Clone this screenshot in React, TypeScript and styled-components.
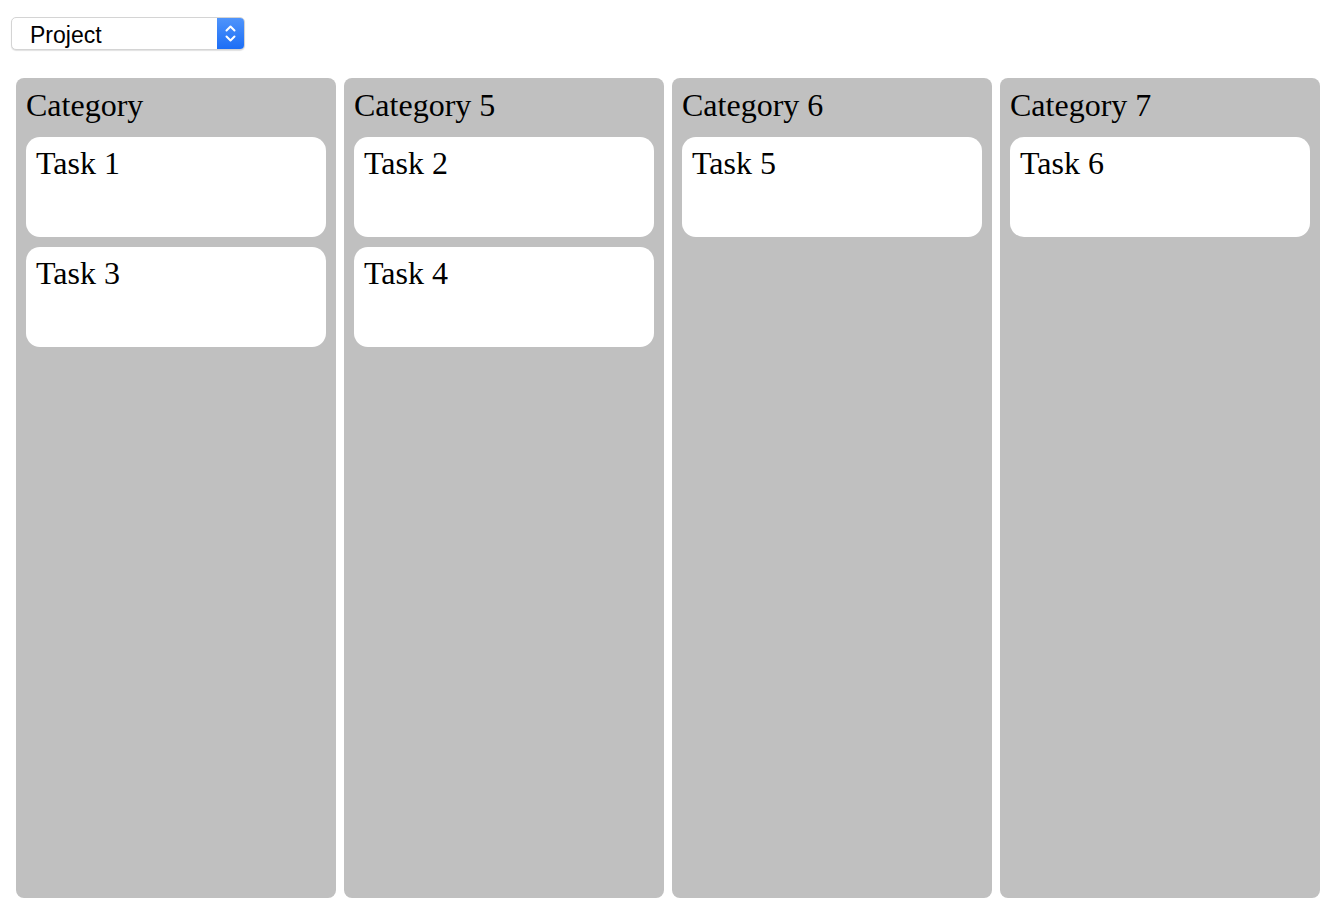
import React from 'react'
import styled, { createGlobalStyle } from "styled-components"

const GlobalStyle = createGlobalStyle`
  html, body {
    margin: 0;
    padding: 0;
    background: #fff;
  }

  body {
    font-family: "Liberation Serif", "Times New Roman", serif;
    color: #000;
  }
`;

const Page = styled.div`
  padding: 17px 20px 20px 11px;
`;

const SelectBox = styled.div`
  display: flex;
  width: 234px;
  height: 33px;
  box-sizing: border-box;
  border: 1px solid #d4d4d4;
  border-radius: 5px;
  background: #fff;
  box-shadow: 0 1px 1px rgba(0, 0, 0, 0.12);
  overflow: hidden;
`;

const Select = styled.select`
  flex: 1;
  appearance: none;
  -webkit-appearance: none;
  border: 0;
  outline: none;
  background: transparent;
  padding: 3px 0 0 18px;
  font-family: "Liberation Sans", Arial, sans-serif;
  font-size: 23px;
  color: #000;
`;

const Arrows = styled.div`
  width: 27px;
  display: flex;
  align-items: center;
  justify-content: center;
  background: linear-gradient(#4f94fb, #1c6ef6);
`;

const Board = styled.div`
  display: flex;
  gap: 8px;
  margin: 28px 0 0 5px;
`;

const Column = styled.div`
  width: 320px;
  height: 820px;
  box-sizing: border-box;
  padding: 9px 10px 10px;
  background: #c0c0c0;
  border-radius: 8px;
  display: flex;
  flex-direction: column;
  gap: 10px;
`;

const ColumnTitle = styled.h2`
  margin: 0 0 3px;
  font-size: 32px;
  font-weight: normal;
  line-height: normal;
`;

const Card = styled.div`
  height: 100px;
  box-sizing: border-box;
  padding: 8px 10px;
  background: #fff;
  border-radius: 14px;
  font-size: 32px;
  line-height: normal;
`;

const columns = [
  { title: "Category", tasks: ["Task 1", "Task 3"] },
  { title: "Category 5", tasks: ["Task 2", "Task 4"] },
  { title: "Category 6", tasks: ["Task 5"] },
  { title: "Category 7", tasks: ["Task 6"] },
];

function App() {
  return (
    <Page>
      <GlobalStyle />
      <SelectBox>
        <Select defaultValue="project">
          <option value="project">Project</option>
        </Select>
        <Arrows>
          <svg width="27" height="33" viewBox="0 0 27 33" fill="none">
            <path d="M9.5 13.5 L13.5 9.5 L17.5 13.5" stroke="#fff" strokeWidth="2" strokeLinecap="round" strokeLinejoin="round" />
            <path d="M9.5 19.5 L13.5 23.5 L17.5 19.5" stroke="#fff" strokeWidth="2" strokeLinecap="round" strokeLinejoin="round" />
          </svg>
        </Arrows>
      </SelectBox>
      <Board>
        {columns.map((col) => (
          <Column key={col.title}>
            <ColumnTitle>{col.title}</ColumnTitle>
            {col.tasks.map((task) => (
              <Card key={task}>{task}</Card>
            ))}
          </Column>
        ))}
      </Board>
    </Page>
  );
}

export default App;
